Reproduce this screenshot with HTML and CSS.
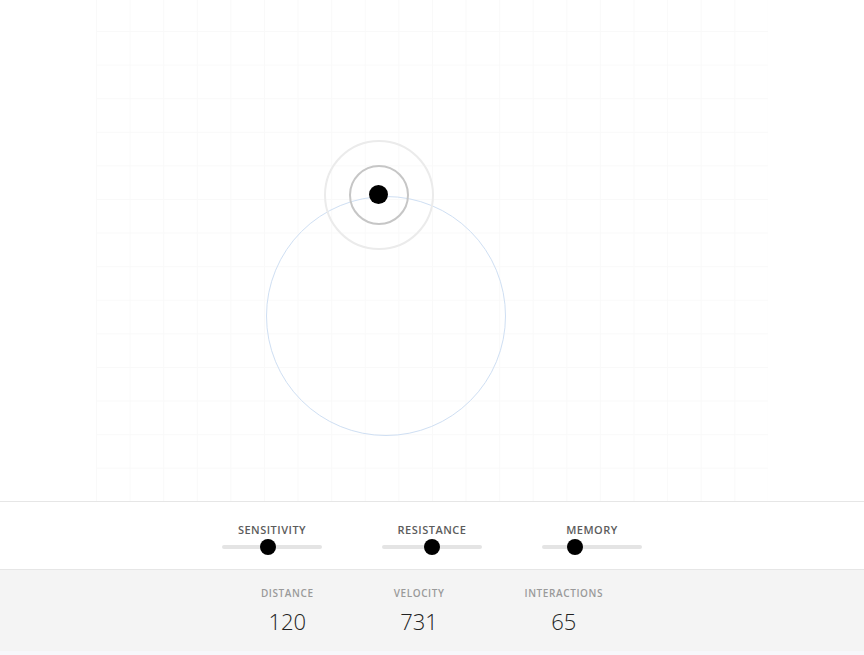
FILE: index.html
```html
<!DOCTYPE html>
<html lang="en">
<head>
  <meta charset="UTF-8" />
  <meta name="viewport" content="width=device-width,initial-scale=1" />
  <title>Field</title>
  <link rel="stylesheet" href="styles.css">
</head>
<body>
  <section class="stage">
    <div class="grid">
      <div class="field"></div>
      <div class="halo"></div>
      <div class="ring"></div>
      <div class="dot"></div>
    </div>
  </section>

  <section class="controls">
    <label class="ctl">
      <span>Sensitivity</span>
      <input type="range" min="0" max="100" value="45">
    </label>
    <label class="ctl">
      <span>Resistance</span>
      <input type="range" min="0" max="100" value="50">
    </label>
    <label class="ctl">
      <span>Memory</span>
      <input type="range" min="0" max="100" value="30">
    </label>
  </section>

  <section class="stats">
    <div class="stat">
      <span class="lbl">Distance</span>
      <span class="val">120</span>
    </div>
    <div class="stat">
      <span class="lbl">Velocity</span>
      <span class="val">731</span>
    </div>
    <div class="stat">
      <span class="lbl">Interactions</span>
      <span class="val">65</span>
    </div>
  </section>
</body>
</html>
```

FILE: styles.css
```css
:root{
  --line:#e6e6e6;
  --grid:#f9f9f9;
  --panel:#f4f4f4;
  --ink:#000;
}
*{box-sizing:border-box;}
html,body{height:100%;}
body{
  margin:0;
  font-family:"Open Sans","Noto Sans",sans-serif;
  background:#f7f8fb;
  color:#333;
}
.stage{
  height:502px;
  background:#fff;
  border-bottom:1px solid var(--line);
  padding:0 96px;
}
.grid{
  position:relative;
  height:100%;
  background-image:
    linear-gradient(to right, var(--grid) 1px, transparent 1px),
    linear-gradient(to bottom, var(--grid) 1px, transparent 1px);
  background-size:33.6px 33.6px;
  background-position:0 -2.6px;
}

/* free canvas: the shapes sit where the simulation put them */
.field,.halo,.ring,.dot{
  position:absolute;
  border-radius:50%;
}
.field{
  left:170px; top:196px;
  width:240px; height:240px;
  border:1px solid #cfdff3;
}
.halo{
  left:228px; top:140px;
  width:110px; height:110px;
  border:2px solid #ebebeb;
}
.ring{
  left:253px; top:165px;
  width:60px; height:60px;
  border:2px solid #c6c6c6;
}
.dot{
  left:273px; top:185px;
  width:19px; height:19px;
  background:var(--ink);
}

.controls{
  background:#fff;
  border-bottom:1px solid var(--line);
  display:flex;
  justify-content:center;
  gap:60px;
  padding:20px 0 14px;
}
.ctl{
  width:100px;
  display:flex;
  flex-direction:column;
  align-items:center;
  gap:2px;
}
.ctl span{
  font-size:11px;
  line-height:15px;
  font-weight:600;
  letter-spacing:.5px;
  text-transform:uppercase;
  color:#5c5c5c;
}
.ctl input{
  -webkit-appearance:none;
  appearance:none;
  width:100px;
  height:16px;
  margin:0;
  background:transparent;
}
.ctl input::-webkit-slider-runnable-track{
  height:4px;
  border-radius:2px;
  background:#e4e4e4;
}
.ctl input::-webkit-slider-thumb{
  -webkit-appearance:none;
  width:16px; height:16px;
  margin-top:-6px;
  border:none;
  border-radius:50%;
  background:var(--ink);
}

.stats{
  background:var(--panel);
  display:flex;
  justify-content:center;
  gap:80px;
  padding:16px 0 15px;
}
.stat{
  display:flex;
  flex-direction:column;
  align-items:center;
  gap:6px;
}
.lbl{
  font-size:10px;
  line-height:14px;
  font-weight:600;
  letter-spacing:.6px;
  text-transform:uppercase;
  color:#9a9a9a;
}
.val{
  font-size:22px;
  line-height:30px;
  font-weight:300;
  color:#222;
}
```
